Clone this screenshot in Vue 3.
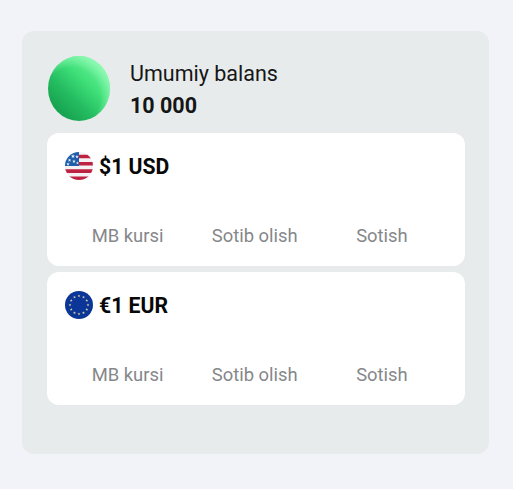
<script setup>
const rates = [
  { code: 'usd', title: '$1 USD' },
  { code: 'eur', title: '€1 EUR' },
]
const columns = ['MB kursi', 'Sotib olish', 'Sotish']
const stars = Array.from({ length: 12 }, (_, i) => {
  const a = (i * Math.PI) / 6
  return { x: 14 + 9 * Math.sin(a), y: 14 - 9 * Math.cos(a) }
})
</script>

<template>
  <main class="page">
    <section class="panel">
      <header class="balance">
        <svg class="orb" viewBox="0 0 62 65">
          <defs>
            <linearGradient id="orb-base" x1="0.16" y1="0.8" x2="0.78" y2="0.1">
              <stop offset="0" stop-color="#18a551" />
              <stop offset="0.3" stop-color="#25bd61" />
              <stop offset="0.65" stop-color="#40e07a" />
              <stop offset="1" stop-color="#66f096" />
            </linearGradient>
            <radialGradient id="orb-rim" cx="0.38" cy="0.64" r="0.74">
              <stop offset="0.62" stop-color="#a5ffc3" stop-opacity="0" />
              <stop offset="1" stop-color="#a5ffc3" stop-opacity="0.85" />
            </radialGradient>
          </defs>
          <ellipse cx="31" cy="32.5" rx="31" ry="32.5" fill="url(#orb-base)" />
          <ellipse cx="31" cy="32.5" rx="31" ry="32.5" fill="url(#orb-rim)" />
        </svg>
        <div class="balance-text">
          <div class="label">Umumiy balans</div>
          <div class="amount">10 000</div>
        </div>
      </header>

      <div class="cards">
        <article v-for="rate in rates" :key="rate.code" class="card">
          <div class="currency">
            <svg v-if="rate.code === 'usd'" class="flag" viewBox="0 0 28 28">
              <clipPath id="flag-round"><circle cx="14" cy="14" r="14" /></clipPath>
              <g clip-path="url(#flag-round)">
                <rect width="28" height="28" fill="#f5f0f3" />
                <path d="M14 2.8H28V6.3H14ZM14 10H28V13.6H14ZM0 17.3H28V20.9H0ZM0 24.5H28V28H0Z" fill="#bd2340" />
                <rect width="14" height="14" fill="#1f5eaa" />
                <path
                  d="M8 2.2l.6 1.3 1.4.1-1.1.9.4 1.4L8 5.2l-1.3.7.4-1.4L6 3.6l1.400-.1ZM12 3l.5 1.100 1.200.1-.9.8.3 1.200-1.100-.6-1.100.6.300-1.200-.9-.8 1.200-.1ZM4.500 6.500l.5 1.100 1.200.1-.9.8.3 1.200-1.100-.6-1.100.6.300-1.200-.9-.8 1.200-.1ZM9 7.600l.5 1.100 1.200.1-.9.8.3 1.200-1.200-.6-1.100.6.300-1.200-.9-.8 1.200-.1ZM3 10.500l.5 1 1.100.1-.8.8.3 1.100-1.100-.5-1 .5.200-1.100-.8-.8 1.100-.1ZM12.500 9.500l.4 1 1 .1-.7.7.2 1-.9-.5-.9.500.2-1-.7-.7 1-.1Z"
                  fill="#dce9f5"
                />
              </g>
            </svg>
            <svg v-else class="flag" viewBox="0 0 28 28">
              <circle cx="14" cy="14" r="14" fill="#0b3596" />
              <path
                v-for="(star, i) in stars"
                :key="i"
                :transform="`translate(${star.x} ${star.y})`"
                d="M0-1.500.4-.5 1.400-.45.6.2.9 1.200 0 .6-.9 1.200-.6.200-1.400-.45-.4-.5Z"
                fill="#d6d6a0"
              />
            </svg>
            <span class="title">{{ rate.title }}</span>
          </div>
          <div class="columns">
            <span v-for="column in columns" :key="column">{{ column }}</span>
          </div>
        </article>
      </div>
    </section>
  </main>
</template>

<style>
body {
  background: #f2f3f9;
}
</style>

<style scoped>
.page {
  box-sizing: border-box;
  height: 489px;
  padding: 31px 24px 35px 22px;
  background: #f2f3f9;
  font-family: Roboto, "Liberation Sans", sans-serif;
}
.panel {
  box-sizing: border-box;
  height: 423px;
  padding: 25px 24.5px 0 25px;
  border-radius: 12px;
  background: #e7ebeb;
}
.balance {
  display: flex;
  align-items: center;
  gap: 20px;
  height: 65px;
  padding-left: 1px;
  margin-bottom: 12px;
}
.orb {
  flex: none;
  width: 62px;
  height: 65px;
}
.balance-text {
  padding-top: 2px;
  color: #151616;
  line-height: 32px;
}
.label {
  font-size: 21.5px;
}
.amount {
  font-size: 21.5px;
  font-weight: 700;
}
.cards {
  display: grid;
  gap: 6.5px;
}
.card {
  box-sizing: border-box;
  height: 132.5px;
  padding: 19px 18px 0;
  border-radius: 12px;
  background: #fff;
}
.currency {
  display: flex;
  align-items: center;
  gap: 6px;
  height: 28px;
}
.flag {
  flex: none;
  width: 28px;
  height: 28px;
}
.title {
  padding-top: 2px;
  color: #080808;
  font-size: 21.2px;
  font-weight: 700;
  line-height: 28px;
}
.columns {
  display: grid;
  grid-template-columns: repeat(3, 1fr);
  margin: 43px 1px 0 -1px;
  color: #85878a;
  font-size: 18.4px;
  line-height: 26px;
  text-align: center;
}
</style>
